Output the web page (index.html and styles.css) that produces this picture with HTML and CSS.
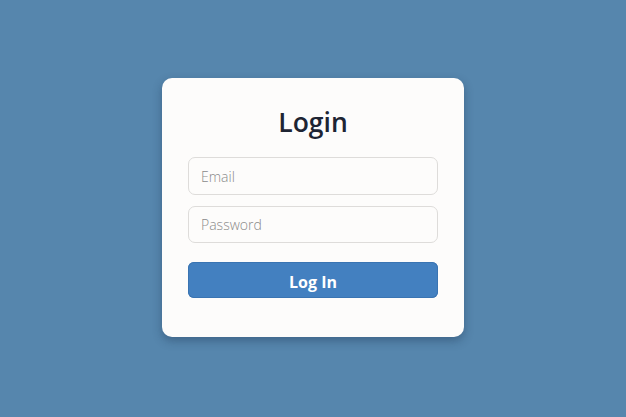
FILE: index.html
```html
<!DOCTYPE html>
<html lang="en">
<head>
<meta charset="utf-8">
<title>Login</title>
<link rel="stylesheet" href="styles.css">
</head>
<body>
<main class="page">
  <form class="card">
    <h1 class="title">Login</h1>
    <input class="field" type="email" placeholder="Email">
    <input class="field field-password" type="password" placeholder="Password">
    <button class="btn" type="button">Log In</button>
  </form>
</main>
</body>
</html>
```

FILE: styles.css
```css
* { box-sizing: border-box; }
html, body {
  margin: 0;
  height: 100%;
}
body {
  background: #5686ad;
  font-family: "Open Sans", "Noto Sans", "DejaVu Sans", sans-serif;
}
.page {
  height: 417px;
  display: flex;
  justify-content: center;
  align-items: flex-start;
  padding-top: 78px;
}
.card {
  width: 302px;
  height: 259px;
  background: #fdfcfb;
  border-radius: 10px;
  box-shadow: 0 4px 10px rgba(20, 40, 70, 0.35);
  padding: 26px 26px 0 26px;
  display: flex;
  flex-direction: column;
}
.title {
  margin: 0 0 17px 0;
  text-align: center;
  font-size: 26.5px;
  line-height: 36px;
  font-weight: 600;
  color: #1e2433;
  height: 36px;
}
.field {
  width: 250px;
  height: 38px;
  border: 1px solid #dedcda;
  border-radius: 7px;
  background: #fdfcfb;
  padding: 0 12px;
  font-family: inherit;
  font-size: 14px;
  font-weight: 300;
  color: #333;
  outline: none;
}
.field::placeholder { color: #8a8a8a; }
.field-password { margin-top: 11px; height: 37px; }
.btn {
  margin-top: 19px;
  width: 250px;
  height: 36px;
  border: none;
  border-radius: 6px;
  background: #4380c0;
  color: #ffffff;
  font-family: inherit;
  font-size: 16px;
  font-weight: 700;
  line-height: 36px;
  padding: 2px 0 0 0;
  box-shadow: inset 0 0 0 1px #3a74b2;
}
```
